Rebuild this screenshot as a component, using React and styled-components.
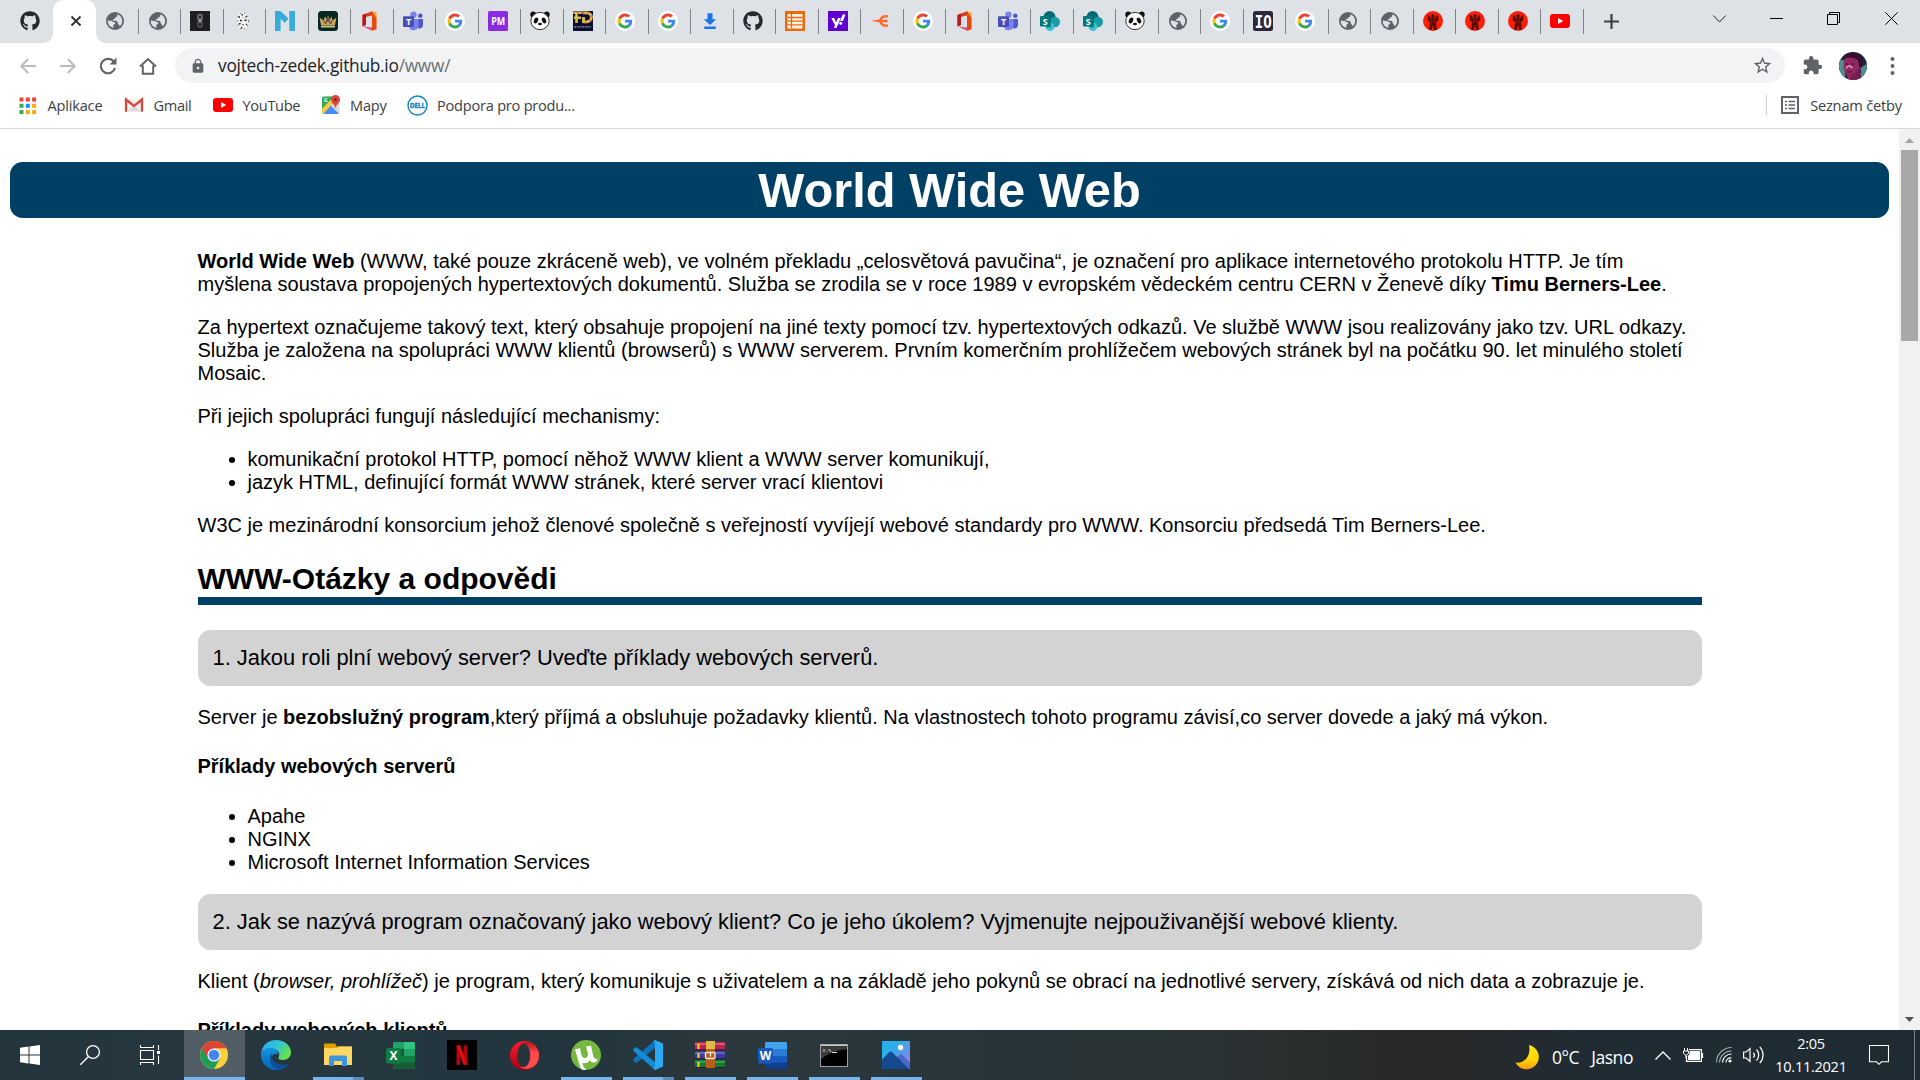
import React from "react";
import styled, { createGlobalStyle } from "styled-components";
import { FaGithub } from "react-icons/fa";
import { MdExtension, MdLock, MdStarBorder } from "react-icons/md";

const ui = `"Open Sans", "Noto Sans", sans-serif`;

const GlobalStyle = createGlobalStyle`
  html, body { margin: 0; padding: 0; overflow: hidden; background: #fff; }
  svg { display: block; flex: none; overflow: visible; }
`;

/* ---------- frame ---------- */

const Desktop = styled.div`
  width: 1920px;
  height: 1080px;
  display: flex;
  flex-direction: column;
  overflow: hidden;
  font-family: ${ui};
`;

const TabStrip = styled.div`
  flex: none;
  height: 43px;
  display: flex;
  background: #dee1e6;
`;

const FirstTab = styled.div`
  width: 53px;
  box-sizing: border-box;
  padding: 11px 0 0 20px;
`;

const ActiveTab = styled.div`
  position: relative;
  width: 43px;
  height: 43px;
  box-sizing: border-box;
  padding: 16px 0 0 18px;
  background: #fff;
  border-radius: 10px 10px 0 0;
  &::before, &::after {
    content: "";
    position: absolute;
    bottom: 0;
    width: 10px;
    height: 10px;
  }
  &::before { left: -10px; background: radial-gradient(circle at 0 0, transparent 9.5px, #fff 10.5px); }
  &::after { right: -10px; background: radial-gradient(circle at 100% 0, transparent 9.5px, #fff 10.5px); }
`;

const Tab = styled.div`
  flex: none;
  width: 42.5px;
  box-sizing: border-box;
  display: flex;
  justify-content: space-between;
  padding: 9px 0 9px 9.3px;
`;

const TabIcon = styled.div`
  width: 20px;
  height: 20px;
  margin-top: 2px;
`;

const TabDivider = styled.div`
  width: 1px;
  height: 25px;
  background: #808387;
`;

const NewTab = styled.div`
  padding: 14px 0 0 20px;
`;

const WindowButtons = styled.div`
  display: flex;
  align-items: center;
  height: 37px;
  margin-left: auto;
`;

const WindowButton = styled.div`
  width: ${(p) => p.$w}px;
  display: flex;
  justify-content: center;
`;

const Toolbar = styled.div`
  flex: none;
  height: 45px;
  display: flex;
  align-items: center;
  background: #fff;
`;

const NavButtons = styled.div`
  width: 175px;
  box-sizing: border-box;
  display: flex;
  align-items: center;
  gap: 20px;
  padding-left: 17.500px;
`;

const Omnibox = styled.div`
  width: 1610px;
  height: 35px;
  box-sizing: border-box;
  display: flex;
  align-items: center;
  padding: 0 12px 0 15px;
  border-radius: 18px;
  background: #f1f3f4;
`;

const Url = styled.div`
  flex: 1;
  margin-left: 12px;
  font-size: 17.3px;
  line-height: 24px;
  letter-spacing: -0.25px;
  color: #202124;
  white-space: nowrap;
`;

const UrlPath = styled.span`
  color: #6b6f74;
`;

const ToolbarEnd = styled.div`
  display: flex;
  align-items: center;
  gap: 16px;
  padding-left: 17px;
`;

const BookmarkBar = styled.div`
  flex: none;
  height: 41px;
  box-sizing: border-box;
  display: flex;
  align-items: center;
  padding: 0 0 6px 19px;
  border-bottom: 1px solid #d6d8da;
`;

const Bookmark = styled.div`
  width: ${(p) => p.$w}px;
  display: flex;
  align-items: center;
`;

const BookmarkIcon = styled.div`
  width: ${(p) => p.$w}px;
`;

const BookmarkLabel = styled.span`
  font-size: 14.6px;
  line-height: 22px;
  letter-spacing: ${(p) => p.$tracking}px;
  color: #3c4043;
  white-space: nowrap;
`;

const ReadingList = styled.div`
  display: flex;
  align-items: center;
  height: 20px;
  margin-left: auto;
  padding: 0 18px 0 14px;
  border-left: 1px solid #cbcdd1;
`;

/* ---------- web page ---------- */

const Viewport = styled.div`
  flex: none;
  height: 901px;
  display: flex;
  overflow: hidden;
  background: #fff;
`;

const Page = styled.div`
  width: 1899px;
  box-sizing: border-box;
  padding: 33px 10px 0;
  font-family: "Liberation Sans", Arial, sans-serif;
  font-size: 20px;
  line-height: 23px;
  color: #000;
`;

const PageTitle = styled.h1`
  margin: 0 0 32px;
  height: 56px;
  line-height: 56px;
  font-size: 48.75px;
  text-align: center;
  color: #fff;
  background: #004065;
  border-radius: 12.5px;
`;

const Article = styled.main`
  width: 1504px;
  margin: 0 auto;
`;

const Paragraph = styled.p`
  margin: 0 0 20px;
`;

const List = styled.ul`
  margin: 0 0 20px;
  padding-left: 50px;
`;

const SectionTitle = styled.h2`
  margin: 25px 0 25px;
  padding-bottom: 1px;
  font-size: 30px;
  line-height: 34px;
  border-bottom: 8px solid #004065;
`;

const Question = styled.div`
  height: 56px;
  box-sizing: border-box;
  margin: 0 0 20px;
  padding: 15px;
  font-size: 21.875px;
  line-height: 26px;
  border-radius: 12.5px;
  background: #d3d3d3;
`;

const Examples = styled.h4`
  margin: 26px 0 27px;
  font-size: 20px;
`;

const Scrollbar = styled.div`
  width: 21px;
  display: flex;
  flex-direction: column;
  align-items: center;
  justify-content: space-between;
  background: #f1f1f1;
`;

const ScrollStart = styled.div`
  display: flex;
  flex-direction: column;
  align-items: center;
  gap: 7px;
  padding-top: 9px;
`;

const ScrollThumb = styled.div`
  width: 17px;
  height: 191px;
  background: #a8a8a8;
`;

const ScrollDown = styled.div`
  padding-bottom: 8px;
`;

/* ---------- taskbar ---------- */

const Taskbar = styled.div`
  flex: none;
  height: 50px;
  display: flex;
  color: #fff;
  background: linear-gradient(90deg, #25353e 0, #263740 330px, #22343d 540px, #2b383d 720px, #28353a 960px, #2a3233 1200px, #282827 1440px, #242b30 1520px, #1f2c34 1600px, #1e2b32 1920px);
`;

const SystemCell = styled.div`
  width: ${(p) => p.$w}px;
  display: flex;
  align-items: center;
  padding-left: 20px;
  box-sizing: border-box;
`;

const AppCell = styled.div`
  width: 61px;
  margin-right: 1px;
  display: flex;
  flex-direction: column;
  align-items: center;
`;

const AppTile = styled.div`
  width: 61px;
  height: 47px;
  box-sizing: border-box;
  padding: 3px 0 0;
  display: flex;
  align-items: center;
  justify-content: center;
  background: ${(p) => (p.$active ? "#525e66" : "transparent")};
`;

const AppBar = styled.div`
  display: ${(p) => (p.$w ? "flex" : "none")};
  justify-content: flex-end;
  width: ${(p) => p.$w}px;
  height: 3px;
  background: #76b5ed;
`;

const AppBarStack = styled.div`
  width: 11px;
  height: 3px;
  background: #5c8db9;
`;

const Tray = styled.div`
  width: 405px;
  margin-left: auto;
  display: flex;
  align-items: center;
`;

const Weather = styled.div`
  width: 140px;
  display: flex;
  align-items: center;
  gap: 13px;
  font-size: 17.5px;
  letter-spacing: -0.45px;
  padding-top: 4px;
  white-space: nowrap;
`;

const WeatherText = styled.span`
  display: flex;
  gap: 12px;
  padding-bottom: 1px;
`;

const TrayIcon = styled.div`
  width: ${(p) => p.$w}px;
`;

const TrayEnd = styled.div`
  width: 40px;
  margin-left: 17px;
`;

const Clock = styled.div`
  width: 82px;
  display: flex;
  flex-direction: column;
  align-items: center;
  padding-bottom: 1px;
  font-size: 14.6px;
  line-height: 23px;
  letter-spacing: -0.3px;
`;

const ShowDesktop = styled.div`
  width: 5px;
  height: 50px;
  margin-left: auto;
  border-left: 1px solid #7b868c;
`;

/* ---------- icons ---------- */

const Svg = ({ s = 20, w, h, vb, children, ...rest }) => (
  <svg width={w || s} height={h || s} viewBox={vb || "0 0 20 20"} fill="none" {...rest}>
    {children}
  </svg>
);

const Glyph = ({ x, y, size, children, family = "Open Sans", fill = "#fff", ...rest }) => (
  <text x={x} y={y} fontSize={size} fontFamily={`"${family}", sans-serif`} fontWeight="700" fill={fill} textAnchor="middle" {...rest}>
    {children}
  </text>
);

const Github = () => <FaGithub size={20} color="#24292e" />;

const Globe = () => (
  <Svg>
    <circle cx="10" cy="10" r="9" fill="#5f6368" />
    <path d="M2.8 9.2c1.7.8 3.1.9 4.3.6.2 1.4 1.3 1.5 3.1 1.4.5 1.1-.4 1.6-1.3 2.2-.9.6-.6 1.7-.3 3.4-3.5-.4-6.2-3.5-5.8-7.6z" fill="#dee1e6" />
    <path d="M12.3 3.2c2.900 1 4.900 3.600 4.900 6.800 0 2.200-1 4.200-2.500 5.400-.3-1.500-.9-2.200-1.900-2.300.4-1.900-.6-3.200-2.300-3.400H7.900c-.2-1 .3-1.500 1-1.700.9-.2 1.200-.7 1.100-1.500 1.700.1 2.700-1.500 2.300-3.300z" fill="#dee1e6" />
  </Svg>
);

const Google = () => (
  <Svg>
    <circle cx="10" cy="10" r="10" fill="#fff" />
    <g transform="translate(2.500 2.500) scale(.3125)">
      <path fill="#ea4335" d="M24 9.500c3.540 0 6.710 1.220 9.210 3.600l6.850-6.850C35.900 2.380 30.470 0 24 0 14.620 0 6.510 5.380 2.560 13.220l7.980 6.190C12.430 13.720 17.740 9.500 24 9.500z" />
      <path fill="#4285f4" d="M46.980 24.550c0-1.570-.15-3.090-.38-4.550H24v9.020h12.940c-.58 2.960-2.260 5.480-4.780 7.180l7.730 6c4.510-4.180 7.090-10.360 7.090-17.650z" />
      <path fill="#fbbc05" d="M10.530 28.590c-.48-1.450-.76-2.990-.76-4.590s.27-3.140.76-4.590l-7.980-6.190C.92 16.460 0 20.120 0 24s.92 7.540 2.560 10.780l7.970-6.190z" />
      <path fill="#34a853" d="M24 48c6.480 0 11.930-2.130 15.890-5.810l-7.730-6c-2.150 1.450-4.920 2.300-8.160 2.300-6.260 0-11.570-4.220-13.470-9.910l-7.980 6.190C6.510 42.620 14.620 48 24 48z" />
    </g>
  </Svg>
);

const Chain = () => (
  <Svg>
    <rect width="20" height="20" fill="#1f1f20" />
    <rect x="8" y="3.500" width="4" height="6.500" rx="2" stroke="#85838f" strokeWidth="1.300" />
    <rect x="8" y="10" width="4" height="6" rx="2" stroke="#5d5a70" strokeWidth="1.300" />
    <path d="M10 7v5" stroke="#b3aeb5" strokeWidth="1.300" />
  </Svg>
);

const Knot = () => (
  <Svg>
    <ellipse cx="10" cy="10" rx="5.800" ry="8.700" fill="#f6f6f6" />
    <ellipse cx="10" cy="10" rx="5.500" ry="8.300" stroke="#555" strokeWidth="1" strokeDasharray="1.200 3" />
    <path d="M5.500 6h1.500M8.500 3.800H10M12.500 5.500l1.200.6M7 9.200l1.800.8M11.500 9.500l2-.5M5.800 13l1.800-.5M9.500 13.800h1M13 13l1 .8M8 17l1.300-.5" stroke="#222" strokeWidth="1.400" />
    <ellipse cx="10" cy="7" rx="1.500" ry="1.800" fill="#dee1e6" />
  </Svg>
);

const BlueN = () => (
  <Svg>
    <path d="M0 0h5.500L13.500 7.600 9.800 12 5.600 7.800V20H0zM14.300 0H20v20h-5.700z" fill="#37acdb" />
  </Svg>
);

const Crown = () => (
  <Svg>
    <rect width="20" height="20" rx="3.500" fill="#062821" />
    <path d="M3 14 1.500 6.500l4 3L7 5.500l2 3L10 4l1.500 4.500 2-3 1 4 4-3L17 14z" fill="#caa45a" />
    <path d="M6 9.500 7.500 13 10 7l2.500 6L14 9.500" stroke="#5b3c20" strokeWidth="1" />
    <path d="M3 15.500h14" stroke="#d9c184" strokeWidth="2" />
    <circle cx="10" cy="9.500" r="1.200" fill="#38499e" />
  </Svg>
);

const Office = () => (
  <Svg>
    <path d="M12 .3 16.400 1.700V18.300L12 19.700z" fill="#f58a1f" />
    <path d="M12 .3 16.400 1.700V10H12z" fill="#fbab25" />
    <path d="M12 .3 2.500 4v11.500L5.500 14V6l6.500-1.500z" fill="#d83b1e" />
    <path d="M2.500 4 6 2.600V14l-3.500 1.500z" fill="#b71c1c" />
    <path d="M3 15.500 12 16.500v3.200z" fill="#dd4f83" />
    <path d="M12 .3v19.400l4.400-1.400V7z" fill="#e8490f" />
  </Svg>
);

const Teams = () => (
  <Svg>
    <circle cx="10.500" cy="3.700" r="3.200" fill="#7b83eb" />
    <circle cx="17.300" cy="4.700" r="2.300" fill="#5059c9" />
    <path d="M14 8h6v6.300a3.500 3.500 0 0 1-6 2.200z" fill="#5059c9" />
    <path d="M6 8h9.500v6.500a5 5 0 0 1-9.500 2z" fill="#7b83eb" />
    <rect y="5.200" width="11" height="10.800" rx="1" fill="#464eb8" />
    <Glyph x={5.500} y={14} size={9}>T</Glyph>
  </Svg>
);

const Pm = () => (
  <Svg>
    <rect width="20" height="20" rx="1.500" fill="#8a2be2" />
    <Glyph x={10.200} y={13.800} size={10} textLength="14" lengthAdjust="spacingAndGlyphs">PM</Glyph>
  </Svg>
);

const Panda = () => (
  <Svg>
    <circle cx="3.200" cy="3.500" r="2.900" fill="#111" />
    <circle cx="16.800" cy="3.500" r="2.900" fill="#111" />
    <ellipse cx="10" cy="10" rx="9.200" ry="8.600" fill="#fff" stroke="#222" strokeWidth=".9" />
    <ellipse cx="6" cy="9.500" rx="2" ry="3" transform="rotate(28 6 9.500)" fill="#111" />
    <ellipse cx="14" cy="9.500" rx="2" ry="3" transform="rotate(-28 14 9.500)" fill="#111" />
    <ellipse cx="10" cy="13" rx="2" ry="1.200" fill="#111" />
  </Svg>
);

const Fd = () => (
  <Svg>
    <rect width="20" height="20" fill="#0c1030" />
    <path d="M0 1.800h9.500M3.500 1.800V12M1 6.800h7" stroke="#d9c04a" strokeWidth="2.600" />
    <path d="M0 1.800h9.500" stroke="#d85b8c" strokeWidth="2.600" strokeDasharray="1.500 2.500" />
    <path d="M10.500 12V6M10 1.800h3.500c6.500 0 6.500 9 0 9h-3" stroke="#dfc23f" strokeWidth="2.800" />
    <path d="M10 1.800h3.500c6.500 0 6.500 9 0 9h-3" stroke="#cf6a6f" strokeWidth="2.800" strokeDasharray="1.500 3" />
    <path d="M1 15.800h17" stroke="#8d93a8" strokeWidth="1.200" strokeDasharray="2 .7" />
  </Svg>
);

const Download = () => (
  <Svg>
    <path d="M7.500 2.200h5v6h3.700L10 14 3.800 8.200h3.700zM4.200 15.600h11.600V18H4.200z" fill="#1a73e8" />
  </Svg>
);

const Sheet = () => (
  <Svg>
    <rect width="20" height="20" fill="#ea6a0a" />
    <path d="M2.500 3h15v14.500h-15z" fill="#fff3e6" />
    <path d="M6.500 3v14.500M2.500 6.500h15M2.500 10.200h15M2.500 13.900h15" stroke="#ea6a0a" strokeWidth="1.300" />
  </Svg>
);

const Yahoo = () => (
  <Svg>
    <rect width="20" height="20" fill="#5f01d1" />
    <path d="M3.300 7h2.900l1.900 4.300L10 7h2.800L8.600 16.800H5.900L7 14.300zM14.600 3.500h3L14.900 10h-2.700z" fill="#fff" />
    <circle cx="12.700" cy="12.300" r="1.500" fill="#fff" />
  </Svg>
);

const OrangeE = () => (
  <Svg>
    <path d="M18 5.400c-4.500-.8-7.500 1.200-7.800 4.600.6 3.600 3.800 5.300 7.800 4.300M9 10h8.500" stroke="#fb6b2b" strokeWidth="2.400" />
    <path d="M1 9.800 10 8.300v3.200z" fill="#fb6b2b" />
  </Svg>
);

const Sharepoint = () => (
  <Svg>
    <circle cx="9.500" cy="6" r="6" fill="#036c70" />
    <circle cx="14.800" cy="11" r="5.200" fill="#1a9ba1" />
    <circle cx="10" cy="15.700" r="4.300" fill="#37c6d0" />
    <path d="M5 5h6v11.500H6z" fill="#024b4e" opacity=".5" />
    <rect y="5" width="10.500" height="10.500" rx="1" fill="#03787c" />
    <Glyph x={5.200} y={13.500} size={9}>S</Glyph>
  </Svg>
);

const Io = () => (
  <Svg>
    <rect width="20" height="20" rx="2.500" fill="#2b283d" />
    <Glyph x={10.200} y={16.500} size={18} family="DejaVu Sans Mono" textLength="17" lengthAdjust="spacingAndGlyphs">IO</Glyph>
  </Svg>
);

const RedStrong = () => (
  <Svg>
    <circle cx="10" cy="10" r="10" fill="#fb1f06" />
    <path d="M4.800 4.500h2.400v2.300h5.600V4.500h2.400v5L13 11l.8 8h-2.600l-1.200-5-1.200 5H6.200L7 11 4.800 9.500z" fill="#5f0b08" />
    <path d="M8.600 8v4M11.400 8v4" stroke="#9c1510" strokeWidth=".9" />
    <circle cx="10" cy="5" r="1.700" fill="#38100e" />
  </Svg>
);

const YouTube = () => (
  <Svg>
    <rect y="3" width="20" height="14" rx="3" fill="#f00" />
    <path d="M8 7v6l5.300-3z" fill="#fff" />
  </Svg>
);

const tabIcons = [
  Globe, Globe, Chain, Knot, BlueN, Crown, Office, Teams, Google, Pm, Panda, Fd,
  Google, Google, Download, Github, Sheet, Yahoo, OrangeE, Google, Office, Teams,
  Sharepoint, Sharepoint, Panda, Globe, Google, Io, Google, Globe, Globe,
  RedStrong, RedStrong, RedStrong, YouTube,
];

const AppsGrid = () => (
  <Svg s={17} vb="0 0 17 17">
    {["#ea4335", "#ea4335", "#ea4335", "#34a853", "#1a8cff", "#fba905", "#34a853", "#fba905", "#fba905"].map((c, i) => (
      <rect key={i} x={(i % 3) * 6.3 + 0.5} y={Math.floor(i / 3) * 6.3 + 0.5} width="4" height="4" fill={c} />
    ))}
  </Svg>
);

const Gmail = () => (
  <Svg>
    <rect x="1.500" y="3.500" width="17" height="13" fill="#f2f2f2" />
    <path d="M3 16.500 10 10l7 6.500z" fill="#dcdcdc" />
    <path d="M2 16.800V4.500l8 6.500 8-6.500v12.300" stroke="#d9483b" strokeWidth="2.300" />
  </Svg>
);

const Maps = () => (
  <Svg>
    <rect x="1" y="1.500" width="17.500" height="17.500" rx="2" fill="#d8d8d8" />
    <path d="M1 3.500a2 2 0 0 1 2-2h10L1 14z" fill="#34a853" />
    <path d="m9.500 10.500 8.500 8.500H2z" fill="#4a8af4" />
    <path d="M1 14 12 3l2.500 2.500L2.500 18.500C1.500 18.500 1 18 1 17z" fill="#fbc732" />
    <Glyph x={4.800} y={7} size={5}>G</Glyph>
    <path d="M14.500 0a4.500 4.500 0 0 0-4.500 4.500c0 3.500 3.800 4.500 4.500 9 .7-4.500 4.500-5.500 4.500-9A4.500 4.500 0 0 0 14.500 0z" fill="#e0443a" />
    <circle cx="14.500" cy="4.500" r="1.600" fill="#7b231e" />
  </Svg>
);

const Dell = () => (
  <Svg s={21} vb="0 0 21 21">
    <circle cx="10.500" cy="10.500" r="9.500" fill="#fff" stroke="#0f85c8" strokeWidth="1.400" />
    <Glyph x={10.500} y={13} size={6.500} fill="#0f85c8" stroke="#0f85c8" strokeWidth=".4" textLength="15" lengthAdjust="spacingAndGlyphs">DELL</Glyph>
  </Svg>
);

const Back = () => (
  <Svg>
    <path d="M18 10H3.500M10.200 3 3.200 10l7 7" stroke="#babcbe" strokeWidth="2" />
  </Svg>
);

const Forward = () => (
  <Svg>
    <path d="M2 10h14.500M9.800 3l7 7-7 7" stroke="#babcbe" strokeWidth="2" />
  </Svg>
);

const Reload = () => (
  <Svg>
    <path d="M15.700 5.600A7.200 7.200 0 1 0 17 12" stroke="#5f6368" strokeWidth="2.100" />
    <path d="M18.500 1.500v7h-7z" fill="#5f6368" />
  </Svg>
);

const Home = () => (
  <Svg>
    <path d="M2 10.500 10 3l8 7.500M4.800 9.500v8.200h10.400V9.500" stroke="#5f6368" strokeWidth="2" />
  </Svg>
);

const Avatar = () => (
  <Svg s={28} vb="0 0 28 28">
    <defs>
      <clipPath id="face"><circle cx="14" cy="14" r="14" /></clipPath>
    </defs>
    <g clipPath="url(#face)">
      <rect width="28" height="28" fill="#1b2347" />
      <path d="M0 8h6v20H0zM22 15l6-3v16h-6z" fill="#4f8d8f" />
      <path d="M5 7Q13 2 20 6l3 6-2 7 2 9H10l-4-7-1.500-6z" fill="#93275f" />
      <path d="M13 22q5-1 7-7l3 13H11z" fill="#72204f" />
      <path d="M4 9Q5 1 13 .5 22 0 24 7l-.5 8-2 1-1.500-2-1-6Q13 4.500 6.500 6z" fill="#33112d" />
      <path d="M7 16.500q2-3 3.500-2.500t3 2" stroke="#d3a1bb" strokeWidth="1.500" />
      <path d="M6.500 12h2.500M12.500 12H16" stroke="#3a1133" strokeWidth="1.200" />
      <path d="M8.500 19.800h4" stroke="#521538" strokeWidth="1.300" />
    </g>
  </Svg>
);

const ReadingIcon = () => (
  <Svg s={18} vb="0 0 18 18">
    <rect x="1" y="1" width="16" height="16" stroke="#5f6368" strokeWidth="2" />
    <path d="M4 5.500h2M7.500 5.500H14M4 9h2M7.500 9H14M4 12.500h2M7.500 12.500H14" stroke="#5f6368" strokeWidth="1.500" />
  </Svg>
);

/* taskbar icons */

const Windows = () => (
  <Svg>
    <path d="M0 2.800 8.500 1.600v7.900H0zM9.500 1.400 20 0v9.500H9.500zM0 10.500h8.500v7.900L0 17.200zM9.500 10.500H20V20L9.500 18.600z" fill="#fff" />
  </Svg>
);

const Search = () => (
  <Svg stroke="#fff" strokeWidth="1.300">
    <circle cx="13" cy="7" r="6.400" />
    <path d="M8.500 11.500.3 19.700" />
  </Svg>
);

const TaskView = () => (
  <Svg stroke="#fff" strokeWidth="1.100">
    <path d="M.5 0v2.500h13V0M.5 20v-2.500h13V20M.5 5.500h13v9H.5zM18.500 0v5M18.500 10.500V19" />
    <rect x="17" y="6" width="3" height="3" fill="#fff" stroke="none" />
  </Svg>
);

const Chrome = () => (
  <Svg s={28} vb="0 0 28 28">
    <circle cx="14" cy="14" r="14" fill="#fdcf3d" />
    <path d="M14 14 1.900 7a14 14 0 0 0 12.100 21l6-10.500z" fill="#1e9d58" />
    <path d="M1.900 7A14 14 0 0 1 26.200 7.300H14L8 17.500z" fill="#db4437" />
    <circle cx="14" cy="14" r="6.600" fill="#f1f1f1" />
    <circle cx="14" cy="14" r="5.300" fill="#4486f4" />
  </Svg>
);

const Edge = () => (
  <Svg s={30} vb="0 0 30 30">
    <defs>
      <linearGradient id="edgeTop" x1="0" y1="0" x2="1" y2=".5">
        <stop offset="0" stopColor="#2ba9ea" />
        <stop offset=".5" stopColor="#2fc1df" />
        <stop offset="1" stopColor="#65e34f" />
      </linearGradient>
      <linearGradient id="edgeBottom" x1="0" y1="0" x2="0" y2="1">
        <stop offset="0" stopColor="#1494e0" />
        <stop offset="1" stopColor="#0762b5" />
      </linearGradient>
    </defs>
    <path d="M0 14C1 5 7 0 15 0c9 0 15 6 15 12.500 0 4.500-3.500 7.500-8 7.500-3.500 0-5-1-4.500-2.200C19 15 19 10 13 9 7 8 2 10 0 14z" fill="url(#edgeTop)" />
    <path d="M0 15C0 10 5 7.500 10.500 8c4 .4 7 3 7 6.500-6-3-8.500 3-5 8 3 4 9 5 14.500 1.500C24 28 19 30 15 30 6 30 0 23 0 15z" fill="url(#edgeBottom)" />
    <path d="M10.800 13c-4 5-2 14 7 16.800 4-.8 7.500-3 9.700-6.300C19 27 10 23 10.800 13z" fill="#0c4f9d" />
  </Svg>
);

const Explorer = () => (
  <Svg w={28} h={24} vb="0 0 28 24">
    <path d="M0 1.500Q0 .5 1 .5h10l2 3H28V22H0z" fill="#e1a000" />
    <path d="M0 5h13l2-1.500h12q1 0 1 1V22H0z" fill="#ffd765" />
    <path d="M5 23V14.500q0-2 2-2h14q2 0 2 2V23h-5v-5h-8v5z" fill="#3b95dd" />
  </Svg>
);

const Excel = () => (
  <Svg w={29} h={27} vb="0 0 29 27">
    <rect x="7" width="22" height="27" rx="1.500" fill="#21a366" />
    <path d="M18 0h9.500A1.500 1.500 0 0 1 29 1.500V7H18z" fill="#33c481" />
    <path d="M7 14h22v7H7z" fill="#107c41" />
    <path d="M7 7h11v7H7zM7 20.500h22v5A1.500 1.500 0 0 1 27.500 27h-19A1.500 1.500 0 0 1 7 25.500z" fill="#185c37" />
    <rect y="6" width="15" height="15.500" rx="1.500" fill="#107c41" />
    <Glyph x={7.500} y={18} size={12}>X</Glyph>
  </Svg>
);

const Netflix = () => (
  <Svg s={30} vb="0 0 30 30">
    <rect width="30" height="30" fill="#000" />
    <path d="M9.500 5.500h3.800v19l-3.800.5zM16.500 5.500h3.800V25l-3.800-.5z" fill="#b1060f" />
    <path d="M9.500 5.500h3.800L20.300 25l-3.900-.5z" fill="#e50914" />
  </Svg>
);

const Opera = () => (
  <Svg s={29} vb="0 0 29 29">
    <defs>
      <linearGradient id="opera" x1="0" y1="0" x2="0" y2="1">
        <stop offset="0" stopColor="#ff1b2d" />
        <stop offset="1" stopColor="#a70014" />
      </linearGradient>
      <linearGradient id="operaRight" x1="0" y1="0" x2="0" y2="1">
        <stop offset="0" stopColor="#b0101c" />
        <stop offset=".4" stopColor="#ff4b4b" />
        <stop offset="1" stopColor="#ff4b4b" />
      </linearGradient>
    </defs>
    <circle cx="14.500" cy="14.500" r="14.500" fill="url(#opera)" />
    <path d="M11 2.500Q18-1 24.200 3.700a14.500 14.500 0 0 1 0 21.600Q18 30 11 26.500z" fill="url(#operaRight)" />
    <ellipse cx="13.700" cy="14.500" rx="6.500" ry="11.500" fill="#25353c" />
  </Svg>
);

const Utorrent = () => (
  <Svg s={30} vb="0 0 30 30">
    <circle cx="15" cy="15" r="15" fill="#76b83f" />
    <path d="M4 9.500 9 8c1 5 1.500 10 4.500 10 3 0 4-2.500 3-6L15 6.500l5-.8c1.500 6 2 11 3.500 12.500 1 1 2 .8 2.800.3.500 2-1 4-3.300 4-2 0-3.300-1-4.200-2.600-1.500 3-5 4-7.300 2.800.3 3 1.500 5 3.500 7.300h-3C8.500 29 8 22 4 9.500z" fill="#fff" />
  </Svg>
);

const VsCode = () => (
  <Svg s={30} vb="0 0 30 30">
    <path d="M22 0v8L4 22.500q-1 .7-2 0L.5 21q-1-1 0-2z" fill="#0b72bb" />
    <path d="M22 30v-8L4 7.500q-1-.7-2 0L.5 9q-1 1 0 2z" fill="#138bd5" />
    <path d="M22 0 30 3.500v23L22 30q-1-.3-1.500-1.200L22 27V3L20.500 1.200Q21 .3 22 0z" fill="#2aaaf3" />
  </Svg>
);

const WinRar = () => (
  <Svg s={30} vb="0 0 30 30">
    <rect y="2" width="30" height="8" rx="1" fill="#b7264c" />
    <path d="M0 4h30" stroke="#e36d87" strokeWidth="1.500" />
    <rect y="11" width="30" height="8" rx="1" fill="#3e3b9e" />
    <path d="M0 13h30" stroke="#7672cf" strokeWidth="1.500" />
    <rect y="20" width="30" height="8" rx="1" fill="#137b32" />
    <path d="M0 22h30" stroke="#34a956" strokeWidth="1.500" />
    <path d="M0 9.800h30M0 18.800h30M0 27.500h30" stroke="#301a35" />
    <path d="M3.500 4v5M3.500 13v5M3.500 22v5" stroke="#f5d52d" strokeWidth="2" />
    <rect x="11" y="1" width="9" height="27" fill="#b85e19" />
    <rect x="11" y="1" width="9" height="8" fill="#e2ba48" />
    <rect x="10.500" y="12.500" width="9.500" height="6" rx="1" stroke="#eee3d4" strokeWidth="1.400" />
    <path d="M15.500 12v4.500" stroke="#fff" strokeWidth="1.200" />
  </Svg>
);

const Word = () => (
  <Svg w={29} h={27} vb="0 0 29 27">
    <rect x="7" width="22" height="27" rx="1.500" fill="#2b7cd3" />
    <path d="M8.500 0h19A1.500 1.500 0 0 1 29 1.500V7H7V1.500A1.500 1.500 0 0 1 8.500 0z" fill="#41a5ee" />
    <path d="M7 14h22v7H7z" fill="#185abd" />
    <path d="M7 20.500h22v5A1.500 1.500 0 0 1 27.500 27h-19A1.500 1.500 0 0 1 7 25.500z" fill="#103f91" />
    <rect y="6" width="15" height="15.500" rx="1.500" fill="#185abd" />
    <Glyph x={7.500} y={18} size={12}>W</Glyph>
  </Svg>
);

const Terminal = () => (
  <Svg w={28} h={23} vb="0 0 28 23">
    <rect x=".5" y=".5" width="27" height="22" fill="#000" stroke="#9c9fa0" />
    <path d="M1 1.500h26" stroke="#c9cbcc" strokeWidth="1.500" />
    <path d="M1 2.500h26v3C16 6 9 9 1 15z" fill="#3b3b3b" />
    <path d="M4 5v3M7 5.500v.5M7 7.500V8M9 5l2 3M12 8.500h5" stroke="#ddd" />
  </Svg>
);

const Photos = () => (
  <Svg s={28} vb="0 0 28 28">
    <defs>
      <linearGradient id="photosSky" x1="0" y1="0" x2="1" y2="1">
        <stop offset=".3" stopColor="#29b0ea" />
        <stop offset="1" stopColor="#a878e0" />
      </linearGradient>
      <clipPath id="photosFrame"><rect width="28" height="28" rx="1" /></clipPath>
    </defs>
    <g clipPath="url(#photosFrame)">
      <rect width="28" height="28" fill="url(#photosSky)" />
      <path d="m11 20 7-6.500q1-1 2 0l8 8V28H11z" fill="#4b67ca" />
      <path d="M0 18.500 7.500 11q1.200-1 2.400 0L27 28H0z" fill="#154a91" />
      <circle cx="18.500" cy="6.500" r="2.700" fill="#fff" />
    </g>
  </Svg>
);

const apps = [
  { Icon: Chrome, bar: 61, active: true },
  { Icon: Edge },
  { Icon: Explorer, bar: 51, stack: true },
  { Icon: Excel },
  { Icon: Netflix },
  { Icon: Opera },
  { Icon: Utorrent, bar: 51 },
  { Icon: VsCode, bar: 51, stack: true },
  { Icon: WinRar, bar: 51 },
  { Icon: Word, bar: 51 },
  { Icon: Terminal, bar: 51 },
  { Icon: Photos, bar: 51 },
];

const Moon = () => (
  <Svg w={24} h={24} vb="0 0 24 24">
    <defs>
      <linearGradient id="moon" x1="0" y1="0" x2="0" y2="1">
        <stop offset="0" stopColor="#ffe81a" />
        <stop offset=".6" stopColor="#ffd500" />
        <stop offset="1" stopColor="#f79a1e" />
      </linearGradient>
    </defs>
    <path d="M14 0a12.300 12.300 0 1 1-13.500 17.500C8 19 16.500 12 14 0z" fill="url(#moon)" />
  </Svg>
);

const Battery = () => (
  <Svg w={21} h={14} vb="0 0 21 14">
    <path d="M6 1.600h12.400v11.800H3.500V8" stroke="#fff" strokeWidth="1.200" />
    <path d="M7 3.500h9.500v8H5.500V8L7 6z" fill="#fff" stroke="#fff" />
    <path d="M19.300 5v5" stroke="#fff" strokeWidth="1.600" />
    <path d="M1.500 0v3M4.500 0v3M.5 3h5v2.500L3.500 7h-1L.5 5.500zM3 7v3" stroke="#fff" />
  </Svg>
);

const Wifi = () => (
  <Svg w={16} h={16} vb="0 0 16 16" stroke="#fff" strokeWidth="1.100">
    <path d="M10 15.500a4.500 4.500 0 0 1 5.500-4.500" />
    <path d="M6.500 15.500A9 9 0 0 1 15.500 7" />
    <path d="M3.500 15.500a12 12 0 0 1 12-11.500M.5 15.500A15 15 0 0 1 15.500.5" stroke="#aab1b5" />
    <circle cx="14" cy="14" r="1.600" fill="#fff" stroke="none" />
  </Svg>
);

const Volume = () => (
  <Svg w={21} h={18} vb="0 0 21 18" stroke="#fff" strokeWidth="1.200">
    <path d="M.6 6h2.600L7 2.500v13L3.200 12H.6z" />
    <path d="M10.500 6.500a4 4 0 0 1 0 5M13.500 3.500a8 8 0 0 1 0 11M16.800.8a12 12 0 0 1 0 16.400" />
  </Svg>
);

const Notification = () => (
  <Svg w={20} h={20} vb="0 0 20 20" stroke="#fff" strokeWidth="1.100">
    <path d="M.5.5h19v16.300h-7L10 19.300l-2.500-2.500h-7z" />
  </Svg>
);

const bookmarks = [
  { Icon: AppsGrid, label: "Aplikace", w: 105, iw: 28.5, t: -0.2 },
  { Icon: Gmail, label: "Gmail", w: 89, iw: 29.5, t: -0.35 },
  { Icon: YouTube, label: "YouTube", w: 108, iw: 29.5, t: -0.33 },
  { Icon: Maps, label: "Mapy", w: 86, iw: 29, t: -0.2 },
  { Icon: Dell, label: "Podpora pro produ...", w: 200, iw: 30, t: -0.24 },
];

export default function App() {
  return (
    <Desktop>
      <GlobalStyle />
      <TabStrip>
        <FirstTab><Github /></FirstTab>
        <ActiveTab>
          <Svg s={10} vb="0 0 10 10"><path d="m.5.500 9 9M9.500.5l-9 9" stroke="#303236" strokeWidth="1.900" /></Svg>
        </ActiveTab>
        {tabIcons.map((Icon, i) => (
          <Tab key={i}>
            <TabIcon><Icon /></TabIcon>
            <TabDivider />
          </Tab>
        ))}
        <NewTab>
          <Svg s={15} vb="0 0 15 15"><path d="M7.500 0v15M0 7.500h15" stroke="#3c4043" strokeWidth="2.200" /></Svg>
        </NewTab>
        <WindowButtons>
          <WindowButton $w={57}><Svg w={13} h={8} vb="0 0 13 8"><path d="m.3.500 6.200 6.500L12.700.500" stroke="#222" /></Svg></WindowButton>
          <WindowButton $w={57}><Svg w={13} h={1} vb="0 0 13 1"><path d="M0 .5h13" stroke="#000" /></Svg></WindowButton>
          <WindowButton $w={57}><Svg s={13} vb="0 0 13 13"><path d="M.5 2.500h10v10H.5zM2.500 2.500v-2h10v10h-2" stroke="#000" /></Svg></WindowButton>
          <WindowButton $w={58}><Svg s={13} vb="0 0 13 13"><path d="m.3.300 12.400 12.400M12.700.3.300 12.700" stroke="#000" /></Svg></WindowButton>
        </WindowButtons>
      </TabStrip>

      <Toolbar>
        <NavButtons>
          <Back />
          <Forward />
          <Reload />
          <Home />
        </NavButtons>
        <Omnibox>
          <MdLock size={16} color="#5f6368" />
          <Url>vojtech-zedek.github.io<UrlPath>/www/</UrlPath></Url>
          <MdStarBorder size={21} color="#5f6368" />
        </Omnibox>
        <ToolbarEnd>
          <MdExtension size={21} color="#5f6368" />
          <Avatar />
          <Svg w={20} h={18} vb="0 0 20 18">
            {[2, 9, 16].map((y) => <circle key={y} cx="9.500" cy={y} r="2" fill="#5f6368" />)}
          </Svg>
        </ToolbarEnd>
      </Toolbar>

      <BookmarkBar>
        {bookmarks.map(({ Icon, label, w, iw, t }) => (
          <Bookmark key={label} $w={w}>
            <BookmarkIcon $w={iw}><Icon /></BookmarkIcon>
            <BookmarkLabel $tracking={t}>{label}</BookmarkLabel>
          </Bookmark>
        ))}
        <ReadingList>
          <BookmarkIcon $w={29}><ReadingIcon /></BookmarkIcon>
          <BookmarkLabel $tracking={-0.18}>Seznam četby</BookmarkLabel>
        </ReadingList>
      </BookmarkBar>

      <Viewport>
        <Page>
          <PageTitle>World Wide Web</PageTitle>
          <Article>
            <Paragraph>
              <b>World Wide Web</b> (WWW, také pouze zkráceně web), ve volném překladu „celosvětová pavučina“, je označení pro aplikace internetového protokolu HTTP. Je tím myšlena soustava propojených hypertextových dokumentů. Služba se zrodila se v roce 1989 v evropském vědeckém centru CERN v Ženevě díky <b>Timu Berners-Lee</b>.
            </Paragraph>
            <Paragraph>
              Za hypertext označujeme takový text, který obsahuje propojení na jiné texty pomocí tzv. hypertextových odkazů. Ve službě WWW jsou realizovány jako tzv. URL odkazy. Služba je založena na spolupráci WWW klientů (browserů) s WWW serverem. Prvním komerčním prohlížečem webových stránek byl na počátku 90. let minulého století Mosaic.
            </Paragraph>
            <Paragraph>Při jejich spolupráci fungují následující mechanismy:</Paragraph>
            <List>
              <li>komunikační protokol HTTP, pomocí něhož WWW klient a WWW server komunikují,</li>
              <li>jazyk HTML, definující formát WWW stránek, které server vrací klientovi</li>
            </List>
            <Paragraph>W3C je mezinárodní konsorcium jehož členové společně s veřejností vyvíjejí webové standardy pro WWW. Konsorciu předsedá Tim Berners-Lee.</Paragraph>
            <SectionTitle>WWW-Otázky a odpovědi</SectionTitle>
            <Question>1. Jakou roli plní webový server? Uveďte příklady webových serverů.</Question>
            <Paragraph>
              Server je <b>bezobslužný program</b>,který příjmá a obsluhuje požadavky klientů. Na vlastnostech tohoto programu závisí,co server dovede a jaký má výkon.
            </Paragraph>
            <Examples>Příklady webových serverů</Examples>
            <List>
              <li>Apahe</li>
              <li>NGINX</li>
              <li>Microsoft Internet Information Services</li>
            </List>
            <Question>2. Jak se nazývá program označovaný jako webový klient? Co je jeho úkolem? Vyjmenujte nejpouživanější webové klienty.</Question>
            <Paragraph>
              Klient (<i>browser, prohlížeč</i>) je program, který komunikuje s uživatelem a na základě jeho pokynů se obrací na jednotlivé servery, získává od nich data a zobrazuje je.
            </Paragraph>
            <Examples>Příklady webových klientů</Examples>
          </Article>
        </Page>
        <Scrollbar>
          <ScrollStart>
            <Svg w={9} h={5} vb="0 0 9 5"><path d="M0 5 4.500 0 9 5z" fill="#a3a3a3" /></Svg>
            <ScrollThumb />
          </ScrollStart>
          <ScrollDown>
            <Svg w={9} h={5} vb="0 0 9 5"><path d="M0 0h9L4.500 5z" fill="#505050" /></Svg>
          </ScrollDown>
        </Scrollbar>
      </Viewport>

      <Taskbar>
        <SystemCell $w={60}><Windows /></SystemCell>
        <SystemCell $w={60}><Search /></SystemCell>
        <SystemCell $w={63.5}><TaskView /></SystemCell>
        {apps.map(({ Icon, bar, stack, active }, i) => (
          <AppCell key={i}>
            <AppTile $active={active}><Icon /></AppTile>
            <AppBar $w={bar}>{stack && <AppBarStack />}</AppBar>
          </AppCell>
        ))}
        <Tray>
          <Weather>
            <Moon />
            <WeatherText><span>0°C</span><span>Jasno</span></WeatherText>
          </Weather>
          <TrayIcon $w={28}><Svg w={16} h={9} vb="0 0 16 9"><path d="M.5 8.500 8 1l7.500 7.500" stroke="#fff" strokeWidth="1.300" /></Svg></TrayIcon>
          <TrayIcon $w={33}><Battery /></TrayIcon>
          <TrayIcon $w={27}><Wifi /></TrayIcon>
          <TrayIcon $w={27}><Volume /></TrayIcon>
          <Clock><span>2:05</span><span>10.11.2021</span></Clock>
          <TrayEnd><Notification /></TrayEnd>
          <ShowDesktop />
        </Tray>
      </Taskbar>
    </Desktop>
  );
}
